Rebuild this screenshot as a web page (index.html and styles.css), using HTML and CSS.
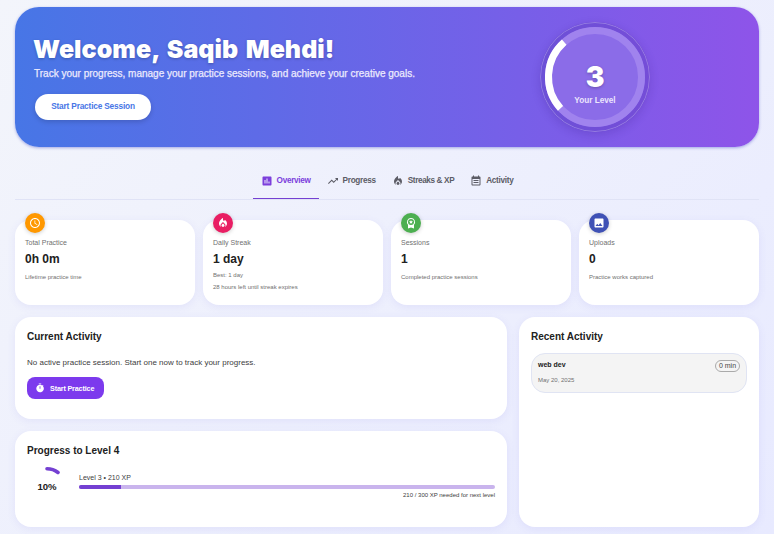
FILE: index.html
```html
<!DOCTYPE html>
<html lang="en">
<head>
<meta charset="utf-8">
<title>Practice Dashboard</title>
<link rel="stylesheet" href="styles.css">
</head>
<body>
<main class="page">
  <header class="hero">
    <div class="hero-copy">
      <h1>Welcome, Saqib Mehdi!</h1>
      <p>Track your progress, manage your practice sessions, and achieve your creative goals.</p>
      <button class="hero-btn">Start Practice Session</button>
    </div>
    <div class="level">
      <svg class="level-ring" viewBox="0 0 110 110">
        <circle cx="55" cy="55" r="54.5" fill="none" stroke="#fff" stroke-opacity=".25"/>
        <circle cx="55" cy="55" r="50" fill="#8b6ce8"/>
        <circle cx="55" cy="55" r="46.5" fill="none" stroke="#a083ee" stroke-width="7"/>
        <path d="M20.500 86.300A46.500 46.500 0 0 1 24.200 20.200" fill="none" stroke="#fff" stroke-width="7"/>
      </svg>
      <div class="level-text"><strong>3</strong><span>Your Level</span></div>
    </div>
  </header>

  <nav class="tabs">
    <a class="tab active"><svg viewBox="0 0 24 24"><path d="M19 3H5c-1.100 0-2 .9-2 2v14c0 1.100.9 2 2 2h14c1.100 0 2-.9 2-2V5c0-1.100-.9-2-2-2zM9 17H7v-7h2v7zm4 0h-2V7h2v10zm4 0h-2v-4h2v4z"/></svg><span>Overview</span></a>
    <a class="tab"><svg viewBox="0 0 24 24"><path d="M16 6l2.290 2.290-4.880 4.880-4-4L2 16.590 3.410 18l6-6 4 4 6.300-6.290L22 12V6z"/></svg><span>Progress</span></a>
    <a class="tab"><svg viewBox="0 0 24 24"><path d="M12 12.900l-2.130 2.090c-.56.560-.87 1.290-.87 2.070C9 18.680 10.350 20 12 20s3-1.320 3-2.940c0-.78-.31-1.520-.87-2.070L12 12.900z"/><path d="M16 6l-.44.550C14.380 8.020 12 7.190 12 5.300V2S4 6 4 13c0 2.920 1.560 5.470 3.890 6.860-.56-.79-.89-1.760-.89-2.800 0-1.320.52-2.560 1.470-3.500L12 10.100l3.530 3.470c.95.930 1.470 2.170 1.470 3.500 0 1.020-.31 1.960-.85 2.750 1.890-1.150 3.290-3.060 3.710-5.300.66-3.550-1.070-6.900-3.860-8.520z"/></svg><span class="tight">Streaks &amp; XP</span></a>
    <a class="tab"><svg viewBox="0 0 24 24"><path d="M17 10H7v2h10v-2zm2-7h-1V1h-2v2H8V1H6v2H5c-1.110 0-1.990.9-1.990 2L3 19c0 1.100.89 2 2 2h14c1.100 0 2-.9 2-2V5c0-1.100-.9-2-2-2zm0 16H5V8h14v11zm-2-5H7v2h10v-2z"/></svg><span>Activity</span></a>
  </nav>

  <section class="stats">
    <article class="card stat">
      <i class="badge orange"><svg viewBox="0 0 24 24"><path d="M12 2C6.500 2 2 6.500 2 12s4.500 10 10 10 10-4.500 10-10S17.500 2 12 2zm0 18c-4.400 0-8-3.600-8-8s3.600-8 8-8 8 3.600 8 8-3.600 8-8 8zm.5-13H11v6l5.200 3.200.8-1.300-4.500-2.700z"/></svg></i>
      <h3>Total Practice</h3><b>0h 0m</b>
      <p class="solo">Lifetime practice time</p>
    </article>
    <article class="card stat">
      <i class="badge pink"><svg viewBox="0 0 24 24"><path d="M12 12.900l-2.130 2.090c-.56.560-.87 1.290-.87 2.070C9 18.680 10.350 20 12 20s3-1.320 3-2.940c0-.78-.31-1.520-.87-2.070L12 12.900z"/><path d="M16 6l-.44.550C14.380 8.020 12 7.190 12 5.300V2S4 6 4 13c0 2.920 1.560 5.470 3.890 6.860-.56-.79-.89-1.760-.89-2.800 0-1.320.52-2.560 1.470-3.500L12 10.100l3.530 3.470c.95.930 1.470 2.170 1.470 3.500 0 1.020-.31 1.960-.85 2.750 1.890-1.150 3.290-3.060 3.710-5.300.66-3.550-1.070-6.900-3.860-8.520z"/></svg></i>
      <h3>Daily Streak</h3><b>1 day</b>
      <p>Best: 1 day</p>
      <p>28 hours left until streak expires</p>
    </article>
    <article class="card stat">
      <i class="badge green"><svg viewBox="0 0 24 24"><path fill-rule="evenodd" d="M12 2a8 8 0 0 1 6 13.300V23l-6-2-6 2v-7.700A8 8 0 0 1 12 2zm0 2a6 6 0 1 0 0 12 6 6 0 0 0 0-12zm0 2l1.200 2.600 2.800.3-2.100 1.900.6 2.800-2.500-1.400-2.500 1.400.6-2.800-2.100-1.900 2.800-.3z"/></svg></i>
      <h3>Sessions</h3><b>1</b>
      <p class="solo">Completed practice sessions</p>
    </article>
    <article class="card stat">
      <i class="badge blue"><svg viewBox="0 0 24 24"><path d="M21 19V5c0-1.100-.9-2-2-2H5c-1.100 0-2 .9-2 2v14c0 1.100.9 2 2 2h14c1.100 0 2-.9 2-2zM8.500 13.500l2.500 3.010L14.500 12l4.500 6H5l3.500-4.500z"/></svg></i>
      <h3>Uploads</h3><b>0</b>
      <p class="solo">Practice works captured</p>
    </article>
  </section>

  <section class="panels">
    <div class="left">
      <article class="card panel current">
        <h2>Current Activity</h2>
        <p>No active practice session. Start one now to track your progress.</p>
        <button class="start"><svg viewBox="0 0 24 24"><path fill-rule="evenodd" d="M9 1h6v2H9zm10 6.400l1.400-1.400-1.400-1.400-1.500 1.400A9 9 0 1 0 19 7.400zM11 8h2v6h-2z"/></svg><span>Start Practice</span></button>
      </article>
      <article class="card panel next">
        <h2>Progress to Level 4</h2>
        <div class="next-row">
          <div class="gauge">
            <svg viewBox="0 0 40 40"><path d="M20 1.800A18.200 18.200 0 0 1 31 5.500" fill="none" stroke="#7440d2" stroke-width="3.600" stroke-linecap="round"/></svg>
            <span>10%</span>
          </div>
          <div class="xp">
            <div class="xp-label">Level 3 • 210 XP</div>
            <div class="bar"><div class="fill" style="width:10%"></div></div>
            <div class="xp-note">210 / 300 XP needed for next level</div>
          </div>
        </div>
      </article>
    </div>
    <article class="card panel recent">
      <h2>Recent Activity</h2>
      <div class="entry">
        <div><strong>web dev</strong><time>May 20, 2025</time></div>
        <em>0 min</em>
      </div>
    </article>
  </section>
</main>
</body>
</html>
```
FILE: styles.css
```css
* { box-sizing: border-box; margin: 0; padding: 0; }
html, body { height: 534px; overflow: hidden; }
body {
  font-family: "Liberation Sans", Arial, sans-serif;
  color: #212121;
  background: linear-gradient(135deg, #f3f5fb 0%, #e8eaff 100%);
}
h1, h2, h3, p, b, button, .tab, .xp-label, .xp-note, strong, time { white-space: nowrap; }
button { border: 0; font-family: inherit; }
svg { display: block; fill: currentColor; flex: none; }
.page { padding: 7px 15px 0; }

.hero {
  height: 140px;
  border-radius: 24px;
  background: linear-gradient(90deg, #4776e6, #8e54e9);
  box-shadow: 0 1px 3px rgba(71, 80, 200, .45);
  display: flex;
  justify-content: space-between;
  padding: 0 109px 0 20px;
  color: #fff;
}
.hero-copy { padding-top: 28px; }
.hero h1 {
  margin-left: -2px;
  font: 900 25px/28px Inter, "Liberation Sans", sans-serif;
  letter-spacing: .05px;
  word-spacing: 2.5px;
  text-shadow: 0 1px 3px rgba(0, 0, 0, .25);
}
.hero p { font-size: 10px; line-height: 14px; margin: 4px 0 0 -1px; color: #eceafd; -webkit-text-stroke: .25px #eceafd; }
.hero-btn {
  margin-top: 13px;
  width: 116px;
  height: 26px;
  padding-bottom: 2px;
  border-radius: 13px;
  background: #fff;
  color: #4776e6;
  font-size: 8.3px;
  font-weight: 700;
  letter-spacing: -.18px;
  box-shadow: 0 2px 5px rgba(0, 0, 0, .16);
}
.level { width: 110px; height: 110px; margin-top: 15px; display: grid; }
.level > * { grid-area: 1 / 1; }
.level-ring { width: 110px; height: 110px; border-radius: 50%; background: rgba(60, 30, 150, .2); box-shadow: 0 3px 10px rgba(50, 20, 130, .2); }
.level-text { z-index: 1; display: flex; flex-direction: column; align-items: center; padding-top: 39px; }
.level-text strong { font: 900 28px/32px Inter, sans-serif; text-shadow: 0 1px 3px rgba(0, 0, 0, .25); }
.level-text span { font-size: 8.2px; font-weight: 700; line-height: 12px; color: #ebe5fd; margin-top: 2px; }

.tabs {
  display: flex;
  justify-content: center;
  height: 37px;
  margin-top: 16px;
  border-bottom: 1px solid #e0e3f6;
  color: #5c5c66;
}
.tab { display: flex; align-items: center; gap: 4px; padding: 0 8px; font-size: 8.2px; font-weight: 700; letter-spacing: -.3px; height: 36px; border-bottom: 1px solid transparent; }
.tab .tight { letter-spacing: -.37px; }
.tab svg { width: 12px; height: 12px; }
.tab.active { color: #7c3fdc; border-bottom-color: #7440d2; }

.card { background: #fff; box-shadow: 0 2px 8px rgba(100, 90, 220, .09); }
.stats { display: grid; grid-template-columns: repeat(4, 1fr); gap: 8px; margin-top: 20px; }
.stat { height: 85px; border-radius: 16px; padding: 0 10px; }
.badge {
  display: grid;
  place-items: center;
  width: 20px;
  height: 20px;
  margin-top: -7px;
  border-radius: 50%;
  color: #fff;
  box-shadow: 0 1px 4px rgba(0, 0, 0, .2);
}
.badge svg { width: 12px; height: 12px; }
.orange { background: #ff9800; }
.pink { background: #e91e63; }
.green { background: #4caf50; }
.blue { background: #3f51b5; }
.stat h3 { font-size: 7px; font-weight: 400; line-height: 10px; margin-top: 5px; color: #707070; }
.stat b { display: block; font-size: 12px; line-height: 16px; margin-top: 3px; }
.stat p { font-size: 6px; line-height: 8px; margin-top: 4px; color: #707070; }
.stat .solo { margin-top: 6px; }

.panels { display: grid; grid-template-columns: 492px 240px; gap: 12px; margin-top: 12px; }
.left { display: grid; grid-template-rows: 102px 96px; gap: 12px; }
.panel { border-radius: 16px; padding: 12px; }
.panel h2 { font-size: 10px; line-height: 16px; }
.current p { font-size: 8px; line-height: 12px; margin-top: 12px; color: #404040; }
.start {
  display: flex;
  align-items: center;
  gap: 5px;
  width: 77px;
  height: 22px;
  margin-top: 8px;
  padding: 0 8px;
  border-radius: 8px;
  background: #7c3aed;
  color: #fff;
  font-size: 7.2px;
  font-weight: 700;
  letter-spacing: -.15px;
}
.start svg { width: 10px; height: 10px; }
.next-row { display: flex; gap: 12px; margin-top: 8px; }
.gauge { display: grid; width: 40px; height: 40px; place-items: center; font-size: 9.6px; font-weight: 700; }
.gauge > * { grid-area: 1 / 1; }
.gauge svg { width: 40px; height: 40px; }
.gauge span { padding-bottom: 2px; }
.xp { flex: 1; }
.xp-label { font-size: 7px; line-height: 10px; margin-top: 6px; color: #404040; }
.bar { height: 4px; margin-top: 2px; border-radius: 2px; background: #c9b4ed; overflow: hidden; }
.fill { height: 4px; background: #7440d2; }
.xp-note { font-size: 6px; line-height: 8px; margin-top: 2px; text-align: right; color: #404040; }
.entry {
  display: flex;
  justify-content: space-between;
  height: 40px;
  margin-top: 8px;
  padding: 6px 6px 0;
  border: 1px solid #e0e4f3;
  border-radius: 14px;
  background: #f4f4f4;
}
.entry strong, .entry time { display: block; }
.entry strong { font-size: 7px; line-height: 10px; }
.entry time { font-size: 6px; line-height: 8px; margin-top: 6px; color: #707070; }
.entry em { width: 25px; height: 12px; border: 1px solid #aaa; border-radius: 6px; font: 7px/10px "Liberation Sans", sans-serif; text-align: center; color: #444; }
```
